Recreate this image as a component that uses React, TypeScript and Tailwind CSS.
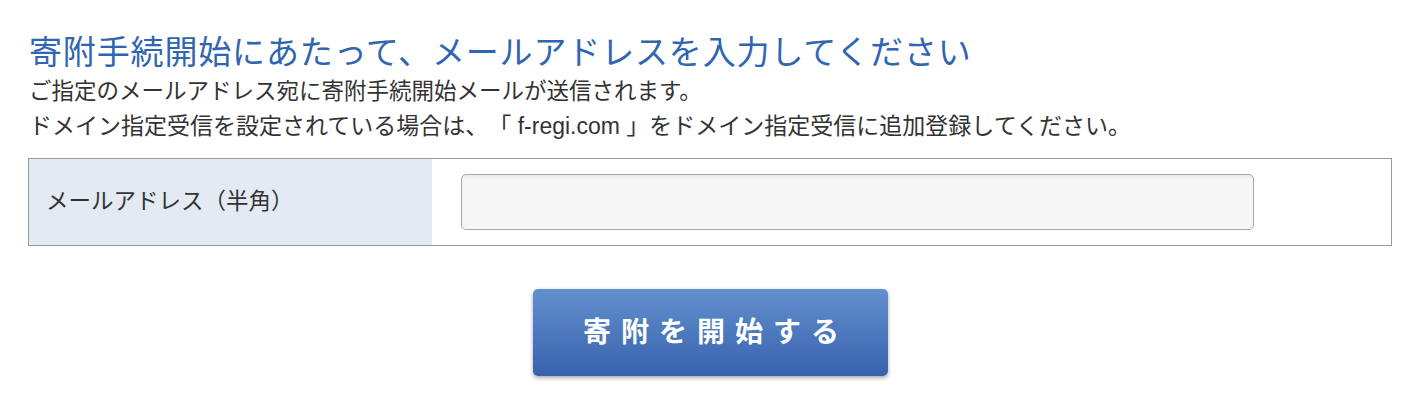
import React from "react";

export default function App() {
  const jp = { fontFamily: '"Liberation Sans", "Noto Sans CJK JP", sans-serif' };
  return (
    <div className="w-[1417px] h-[405px] bg-white [text-spacing-trim:space-all]" style={jp}>
      <div className="pl-[29px] pr-[25px] pt-[31px]">
        <h1 className="text-[33px] leading-[44px] text-[#2f65b1] font-normal tracking-[0.85px]">
          寄附手続開始にあたって、メールアドレスを入力してください
        </h1>
        <p className="text-[22.5px] leading-[34px] text-[#333]">
          ご指定のメールアドレス宛に寄附手続開始メールが送信されます。
        </p>
        <p className="text-[23px] leading-[34px] text-[#333]">
          ドメイン指定受信を設定されている場合は、「 f-regi.com 」をドメイン指定受信に追加登録してください。
        </p>
        <div className="mt-[15px] w-[1364px] -ml-[1px] flex border-[1.5px] border-[#9a9a9a] h-[88px]">
          <div className="w-[403px] bg-[#e3eaf4] flex items-center pl-[17px] text-[22.5px] text-[#333]">
            メールアドレス（半角）
          </div>
          <div className="flex-1 flex items-center pl-[29px]">
            <input
              type="text"
              className="w-[793px] h-[56px] rounded-[5px] border-[1.5px] border-[#a9a9a9] bg-[#f7f7f7] shadow-[inset_0_2px_3px_rgba(0,0,0,0.06)] outline-none"
            />
          </div>
        </div>
        <div className="flex justify-center mt-[43px] pr-[1px]">
          <button className="w-[355px] h-[87px] rounded-[5px] bg-gradient-to-b from-[#6290cd] to-[#3862ad] text-white text-[28px] font-bold tracking-[10px] pl-[12px] shadow-[0_2px_4px_rgba(0,0,0,0.35)]">
            寄附を開始する
          </button>
        </div>
      </div>
    </div>
  );
}
